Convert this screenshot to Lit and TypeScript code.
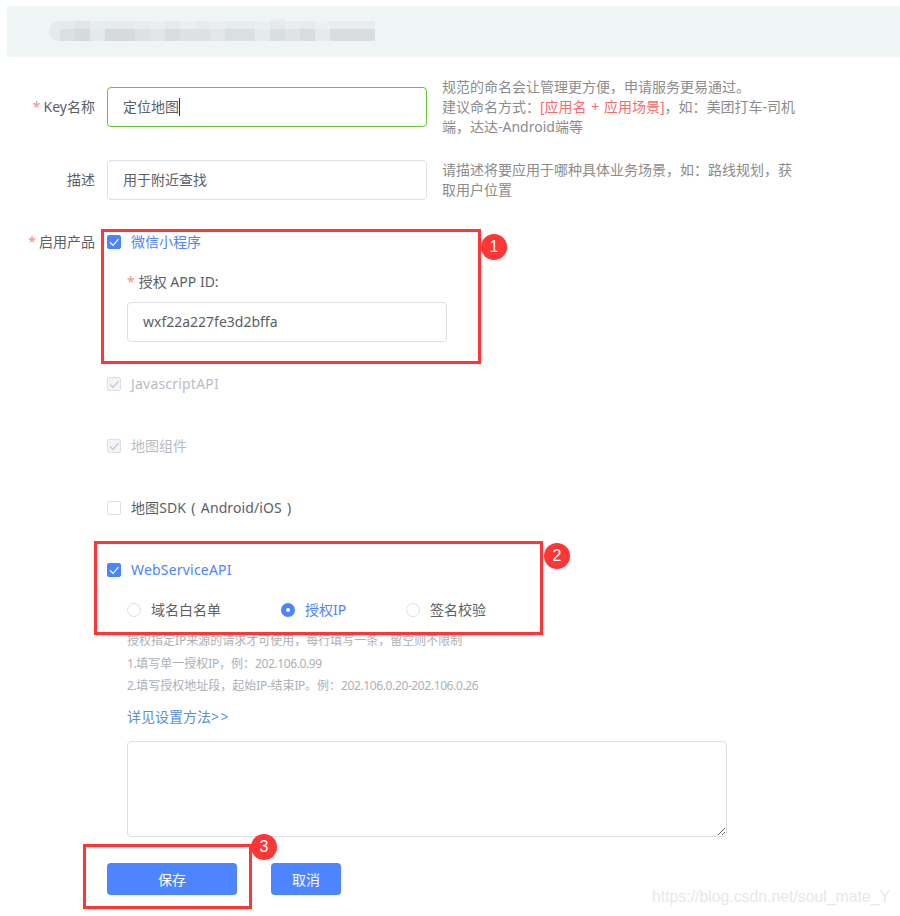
import { LitElement, html, css } from "lit";
import { customElement } from "lit/decorators.js";

const BLUR: [string, string][] = [
  ["#e6eaea", "#dadfdf"], ["#e3e6e6", "#d6dada"], ["#e9eded", "#e4e9e9"], ["#e7ebeb", "#d6dada"],
  ["#e7ebeb", "#d6dada"], ["#e8ecec", "#dde1e1"], ["#ebefef", "#e2e6e6"], ["#e6eaea", "#d9dddd"],
  ["#ebefef", "#dde1e1"], ["#e7ebeb", "#dde1e1"], ["#ebefef", "#e3e7e7"], ["#e8ecec", "#dadfdf"],
  ["#e8ecec", "#dadfdf"], ["#ebefef", "#e5eaea"], ["#e5e9e9", "#d9dedf"], ["#e9eded", "#dfe3e3"],
  ["#e7ebeb", "#d8dcdc"], ["#ecf0f0", "#e6eaea"], ["#e8ecec", "#d9dddd"], ["#e8ecec", "#d9dddd"],
  ["#e8ecec", "#d9dddd"],
];

@customElement("app-root")
export class AppRoot extends LitElement {
  static styles = css`
    :host {
      display: block;
      position: relative;
      width: 900px;
      height: 916px;
      overflow: hidden;
      background: #fff;
      font-family: "Noto Sans", "Noto Sans CJK SC", sans-serif;
      font-size: 14px;
      color: #5c6066;
    }
    .banner {
      height: 51px;
      margin: 6px 0 0 7px;
      background: #eff4f4;
      display: flex;
      align-items: center;
      padding: 0 0 0 42px;
      box-sizing: border-box;
    }
    .blur {
      display: flex;
      position: relative;
      height: 20px;
      width: 326px;
      background: #e6eaea;
      border-radius: 10px 0 0 10px;
      padding-left: 11px;
      box-sizing: border-box;
      margin-top: -2px;
    }
    .blur::after {
      content: "";
      position: absolute;
      left: 223px;
      top: -2px;
      width: 14px;
      height: 3px;
      border-radius: 7px 7px 0 0;
      background: #e8ecec;
    }
    .blur i {
      display: block;
      width: 15px;
      height: 20px;
      flex: none;
    }
    .form {
      display: flex;
      flex-direction: column;
      padding-top: 30px;
    }
    .row {
      display: grid;
      grid-template-columns: 95px 1fr;
      column-gap: 12px;
    }
    .label {
      text-align: right;
      line-height: 40px;
      white-space: nowrap;
    }
    .star {
      color: #f78989;
      margin-right: 3px;
    }
    .with-hint {
      display: flex;
      gap: 15px;
    }
    .input {
      width: 320px;
      height: 40px;
      box-sizing: border-box;
      border: 1px solid #dcdfe6;
      border-radius: 4px;
      padding: 0 15px;
      line-height: 38px;
      white-space: nowrap;
      flex: none;
    }
    .input.active { border-color: #67c23a; }
    .caret {
      display: inline-block;
      width: 1px;
      height: 18px;
      background: #303133;
      vertical-align: -4px;
    }
    .hint {
      width: 360px;
      line-height: 20px;
      color: #8c8c8c;
      word-spacing: 1px;
    }
    .hint.raised { margin-top: -10px; }
    .hint em { font-style: normal; color: #f56c6c; }
    .row.second { margin-top: 23px; }
    .row.third { margin-top: 35px; }
    .products {
      display: flex;
      flex-direction: column;
    }
    .products-label { line-height: 14px; }
    .check {
      display: flex;
      align-items: center;
      gap: 10px;
      height: 14px;
      line-height: 14px;
      white-space: nowrap;
    }
    .latin { letter-spacing: 0.2px; }
    .wide { word-spacing: 1.5px; letter-spacing: 0.1px; }
    .box {
      width: 14px;
      height: 14px;
      box-sizing: border-box;
      border: 1px solid #dcdfe6;
      border-radius: 2px;
      flex: none;
      display: block;
      overflow: visible;
    }
    .tick { fill: none; stroke: #c0c4cc; stroke-width: 1.2; }
    .check.on { color: #4d84ff; }
    .check.on .box { background: #4d84ff; border-color: #4d84ff; }
    .check.on .tick { stroke: #fff; }
    .check.off { color: #b8bcc2; }
    .check.off .box { background: #f2f4f7; }
    .gap48 { margin-top: 48px; }
    .gap35 { margin-top: 35px; }
    .wechat {
      display: flex;
      flex-direction: column;
      padding-left: 20px;
      margin-top: 26px;
    }
    .appid-label { line-height: 14px; white-space: nowrap; }
    .appid-label .star { margin-right: 4px; }
    .wechat .input { margin-top: 13px; }
    .radios {
      display: flex;
      align-items: center;
      margin: 26px 0 0 20px;
      height: 14px;
      line-height: 14px;
    }
    .radio {
      display: flex;
      align-items: center;
      gap: 10px;
      white-space: nowrap;
    }
    .radio.r1 { width: 154px; }
    .radio.r2 { width: 125px; color: #4d84ff; }
    .dot {
      width: 14px;
      height: 14px;
      box-sizing: border-box;
      border: 1px solid #dcdfe6;
      border-radius: 50%;
      flex: none;
    }
    .radio.r2 .dot { border: 5px solid #4d84ff; background: #fff; }
    .desc {
      margin: 13px 0 0 20px;
      font-size: 12px;
      line-height: 22.5px;
      color: #adb0b5;
      white-space: nowrap;
    }
    .num { letter-spacing: -0.38px; }
    .link {
      margin: 9px 0 0 20px;
      line-height: 20px;
      color: #5b8fd6;
    }
    .link span { letter-spacing: 1.5px; }
    textarea {
      display: block;
      width: 600px;
      height: 96px;
      margin: 14px 0 0 20px;
      box-sizing: border-box;
      border: 1px solid #dcdfe6;
      border-radius: 4px;
      outline: none;
      background: #fff;
      resize: both;
    }
    .actions {
      display: flex;
      gap: 34px;
      margin-top: 26px;
    }
    .btn {
      height: 32px;
      border: 0;
      border-radius: 4px;
      background: #4d84ff;
      color: #fff;
      font: inherit;
      font-size: 14px;
      padding: 0;
    }
    .save { width: 130px; }
    .cancel { width: 70px; }
    .mark {
      position: absolute;
      border: 3px solid #ff3636;
      box-sizing: border-box;
      pointer-events: none;
    }
    .m1 { left: 101px; top: 229px; width: 380px; height: 135px; }
    .m2 { left: 94px; top: 541px; width: 449px; height: 94px; }
    .m3 { left: 83px; top: 844px; width: 169px; height: 65px; }
    .badge {
      position: absolute;
      width: 26px;
      height: 26px;
      border-radius: 50%;
      background: #ff3636;
      color: #fff;
      font-family: "Liberation Sans", sans-serif;
      font-size: 16px;
      line-height: 26px;
      text-align: center;
    }
    .b1 { left: 481px; top: 234px; }
    .b2 { left: 544px; top: 543px; }
    .b3 { left: 251px; top: 834px; }
    .watermark {
      position: absolute;
      left: 652px;
      top: 888px;
      font-family: "Liberation Sans", sans-serif;
      font-size: 15.8px;
      line-height: 18px;
      color: #e8e8e8;
      white-space: nowrap;
    }
  `;

  private tick() {
    return html`<svg class="box" viewBox="0 0 12 12" aria-hidden="true"><path class="tick" d="M2 6.3l3 3 5.5-6.2"/></svg>`;
  }

  render() {
    return html`
      <div class="banner">
        <div class="blur">${BLUR.map(([a, b]) => html`<i style="background:linear-gradient(${a} 40%, ${b} 40%)"></i>`)}</div>
      </div>
      <div class="form">
        <div class="row">
          <div class="label"><span class="star">*</span>Key名称</div>
          <div class="with-hint">
            <div class="input active">定位地图<span class="caret"></span></div>
            <div class="hint raised">规范的命名会让管理更方便，申请服务更易通过。<br />建议命名方式：<em>[应用名 + 应用场景]</em>，如：美团打车-司机端，达达-Android端等</div>
          </div>
        </div>
        <div class="row second">
          <div class="label">描述</div>
          <div class="with-hint">
            <div class="input">用于附近查找</div>
            <div class="hint">请描述将要应用于哪种具体业务场景，如：路线规划，获取用户位置</div>
          </div>
        </div>
        <div class="row third">
          <div class="label products-label"><span class="star">*</span>启用产品</div>
          <div class="products">
            <div class="check on">${this.tick()}微信小程序</div>
            <div class="wechat">
              <div class="appid-label"><span class="star">*</span>授权 APP ID:</div>
              <div class="input">wxf22a227fe3d2bffa</div>
            </div>
            <div class="check off gap35 latin">${this.tick()}JavascriptAPI</div>
            <div class="check off gap48">${this.tick()}地图组件</div>
            <div class="check gap48 wide"><span class="box"></span>地图SDK ( Android/iOS )</div>
            <div class="check on gap48 latin">${this.tick()}WebServiceAPI</div>
            <div class="radios">
              <div class="radio r1"><span class="dot"></span>域名白名单</div>
              <div class="radio r2"><span class="dot"></span>授权IP</div>
              <div class="radio"><span class="dot"></span>签名校验</div>
            </div>
            <div class="desc">授权指定IP来源的请求才可使用，每行填写一条，留空则不限制<br /><span class="num">1.</span>填写单一授权<span class="num">IP</span>，例：<span class="num">202.106.0.99</span><br /><span class="num">2.</span>填写授权地址段，起始<span class="num">IP-</span>结束<span class="num">IP</span>。例：<span class="num">202.106.0.20-202.106.0.26</span></div>
            <div class="link">详见设置方法<span>&gt;&gt;</span></div>
            <textarea></textarea>
            <div class="actions">
              <button class="btn save">保存</button>
              <button class="btn cancel">取消</button>
            </div>
          </div>
        </div>
      </div>
      <div class="mark m1"></div>
      <div class="badge b1">1</div>
      <div class="mark m2"></div>
      <div class="badge b2">2</div>
      <div class="mark m3"></div>
      <div class="badge b3">3</div>
      <div class="watermark">https://blog.csdn.net/soul_mate_Y</div>
    `;
  }
}
